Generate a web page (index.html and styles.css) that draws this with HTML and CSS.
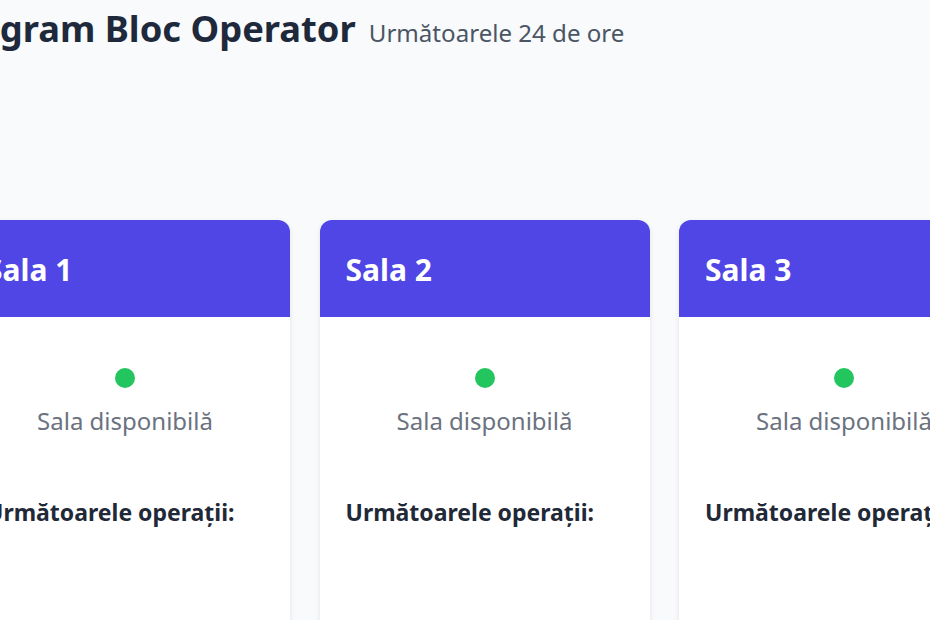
FILE: index.html
```html
<!DOCTYPE html>
<html lang="ro">
<head>
<meta charset="utf-8">
<title>Program Bloc Operator</title>
<link rel="stylesheet" href="styles.css">
</head>
<body>
<main class="page">
  <header class="page-header">
    <h1 class="title">Program Bloc Operator</h1>
    <span class="subtitle">Următoarele 24 de ore</span>
  </header>
  <section class="rooms">
    <article class="room">
      <div class="room-head"><h2>Sala 1</h2></div>
      <div class="room-body">
        <span class="dot"></span>
        <p class="status">Sala disponibilă</p>
        <h3 class="next">Următoarele operații:</h3>
      </div>
    </article>
    <article class="room">
      <div class="room-head"><h2>Sala 2</h2></div>
      <div class="room-body">
        <span class="dot"></span>
        <p class="status">Sala disponibilă</p>
        <h3 class="next">Următoarele operații:</h3>
      </div>
    </article>
    <article class="room">
      <div class="room-head"><h2>Sala 3</h2></div>
      <div class="room-body">
        <span class="dot"></span>
        <p class="status">Sala disponibilă</p>
        <h3 class="next">Următoarele operații:</h3>
      </div>
    </article>
  </section>
</main>
</body>
</html>
```
FILE: styles.css
```css
html, body {
  margin: 0;
  padding: 0;
  background: #f8fafc;
  overflow: hidden;
  font-family: "Noto Sans", "Open Sans", sans-serif;
}
.page {
  width: 1100px;
  margin-left: -40px;
}
.page-header {
  display: flex;
  align-items: baseline;
  gap: 13px;
  height: 220px;
  margin-left: -21px;
}
.title {
  margin: 0;
  padding-top: 5px;
  font-size: 36.3px;
  line-height: 46px;
  font-weight: 700;
  color: #1e293b;
}
.subtitle {
  font-size: 24.1px;
  color: #4b5563;
}
.rooms {
  display: flex;
  gap: 29.5px;
}
.room {
  width: 330px;
  flex: none;
  background: #fff;
  border-radius: 12px;
  box-shadow: 0 2px 6px rgba(15, 23, 42, 0.08), 0 1px 2px rgba(15, 23, 42, 0.06);
  overflow: hidden;
  height: 480px;
}
.room-head {
  box-sizing: border-box;
  background: #4f46e5;
  height: 97px;
  display: flex;
  align-items: center;
  padding: 2px 26px 0;
}
.room-head h2 {
  margin: 0;
  color: #fff;
  font-size: 30px;
  font-weight: 700;
}
.room-body {
  padding: 51px 26px 0;
  display: flex;
  flex-direction: column;
  align-items: center;
}
.dot {
  width: 20px;
  height: 20px;
  border-radius: 50%;
  background: #22c55e;
}
.status {
  margin: 16px 0 0;
  font-size: 24px;
  line-height: 34px;
  color: #6b7280;
}
.next {
  align-self: flex-start;
  margin: 58px 0 0;
  font-size: 23px;
  line-height: 32px;
  font-weight: 700;
  color: #1f2937;
}
```
